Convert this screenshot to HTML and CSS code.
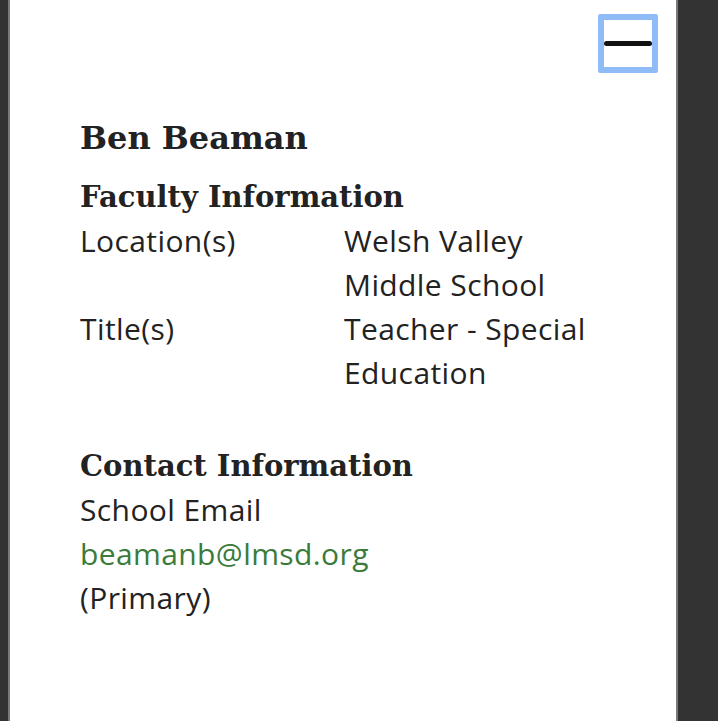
FILE: index.html
```html
<!DOCTYPE html>
<html lang="en">
<head>
<meta charset="utf-8">
<title>Ben Beaman</title>
<link rel="stylesheet" href="styles.css">
</head>
<body>
<div class="frame">
  <div class="panel">
    <div class="toolbar">
      <button class="close-btn" aria-label="Collapse"><span class="bar"></span></button>
    </div>
    <div class="content">
      <h1 class="name">Ben Beaman</h1>
      <h2 class="section-title">Faculty Information</h2>
      <dl class="info-grid">
        <dt>Location(s)</dt>
        <dd>Welsh Valley Middle School</dd>
        <dt>Title(s)</dt>
        <dd>Teacher - Special Education</dd>
      </dl>
      <h2 class="section-title contact-title">Contact Information</h2>
      <div class="contact">
        <div>School Email</div>
        <a class="email" href="#">beamanb@lmsd.org</a>
        <div>(Primary)</div>
      </div>
    </div>
  </div>
</div>
</body>
</html>
```
FILE: styles.css
```css
html, body {
  margin: 0;
  padding: 0;
  height: 100%;
  background: #333333;
}
.frame {
  height: 100%;
  padding: 0 40px 0 8px;
  box-sizing: border-box;
}
.panel {
  height: 100%;
  background: #ffffff;
  border-left: 2px solid #7a7a7a;
  border-right: 2px solid #7a7a7a;
  box-sizing: border-box;
}
.toolbar {
  display: flex;
  justify-content: flex-end;
  padding: 14px 18px 0 0;
}
.close-btn {
  width: 60px;
  height: 59px;
  box-sizing: border-box;
  border: 6px solid #8fbcf7;
  border-radius: 2px;
  background: #fff;
  padding: 0;
  display: flex;
  align-items: center;
  justify-content: center;
}
.bar {
  display: block;
  width: 48px;
  height: 5px;
  border-radius: 3px;
  background: #111;
}
.content {
  padding: 0 70px 0 70px;
  color: #222222;
  font-family: "Open Sans", sans-serif;
  font-size: 30px;
  letter-spacing: 0.4px;
  line-height: 44px;
}
.name {
  font-family: "DejaVu Serif", serif;
  font-weight: bold;
  font-size: 32px;
  letter-spacing: 0;
  line-height: 48px;
  margin: 41px 0 0 0;
}
.section-title {
  font-family: "DejaVu Serif", serif;
  font-weight: bold;
  font-size: 29px;
  letter-spacing: 0;
  line-height: 44px;
  margin: 13px 0 0 0;
}
.info-grid {
  display: grid;
  grid-template-columns: 264px 1fr;
  margin: 0;
}
.info-grid dt, .info-grid dd {
  margin: 0;
}
.contact-title {
  margin-top: 49px;
}
.contact {
  display: flex;
  flex-direction: column;
}
.email {
  color: #3b7b3b;
  text-decoration: none;
}
```
